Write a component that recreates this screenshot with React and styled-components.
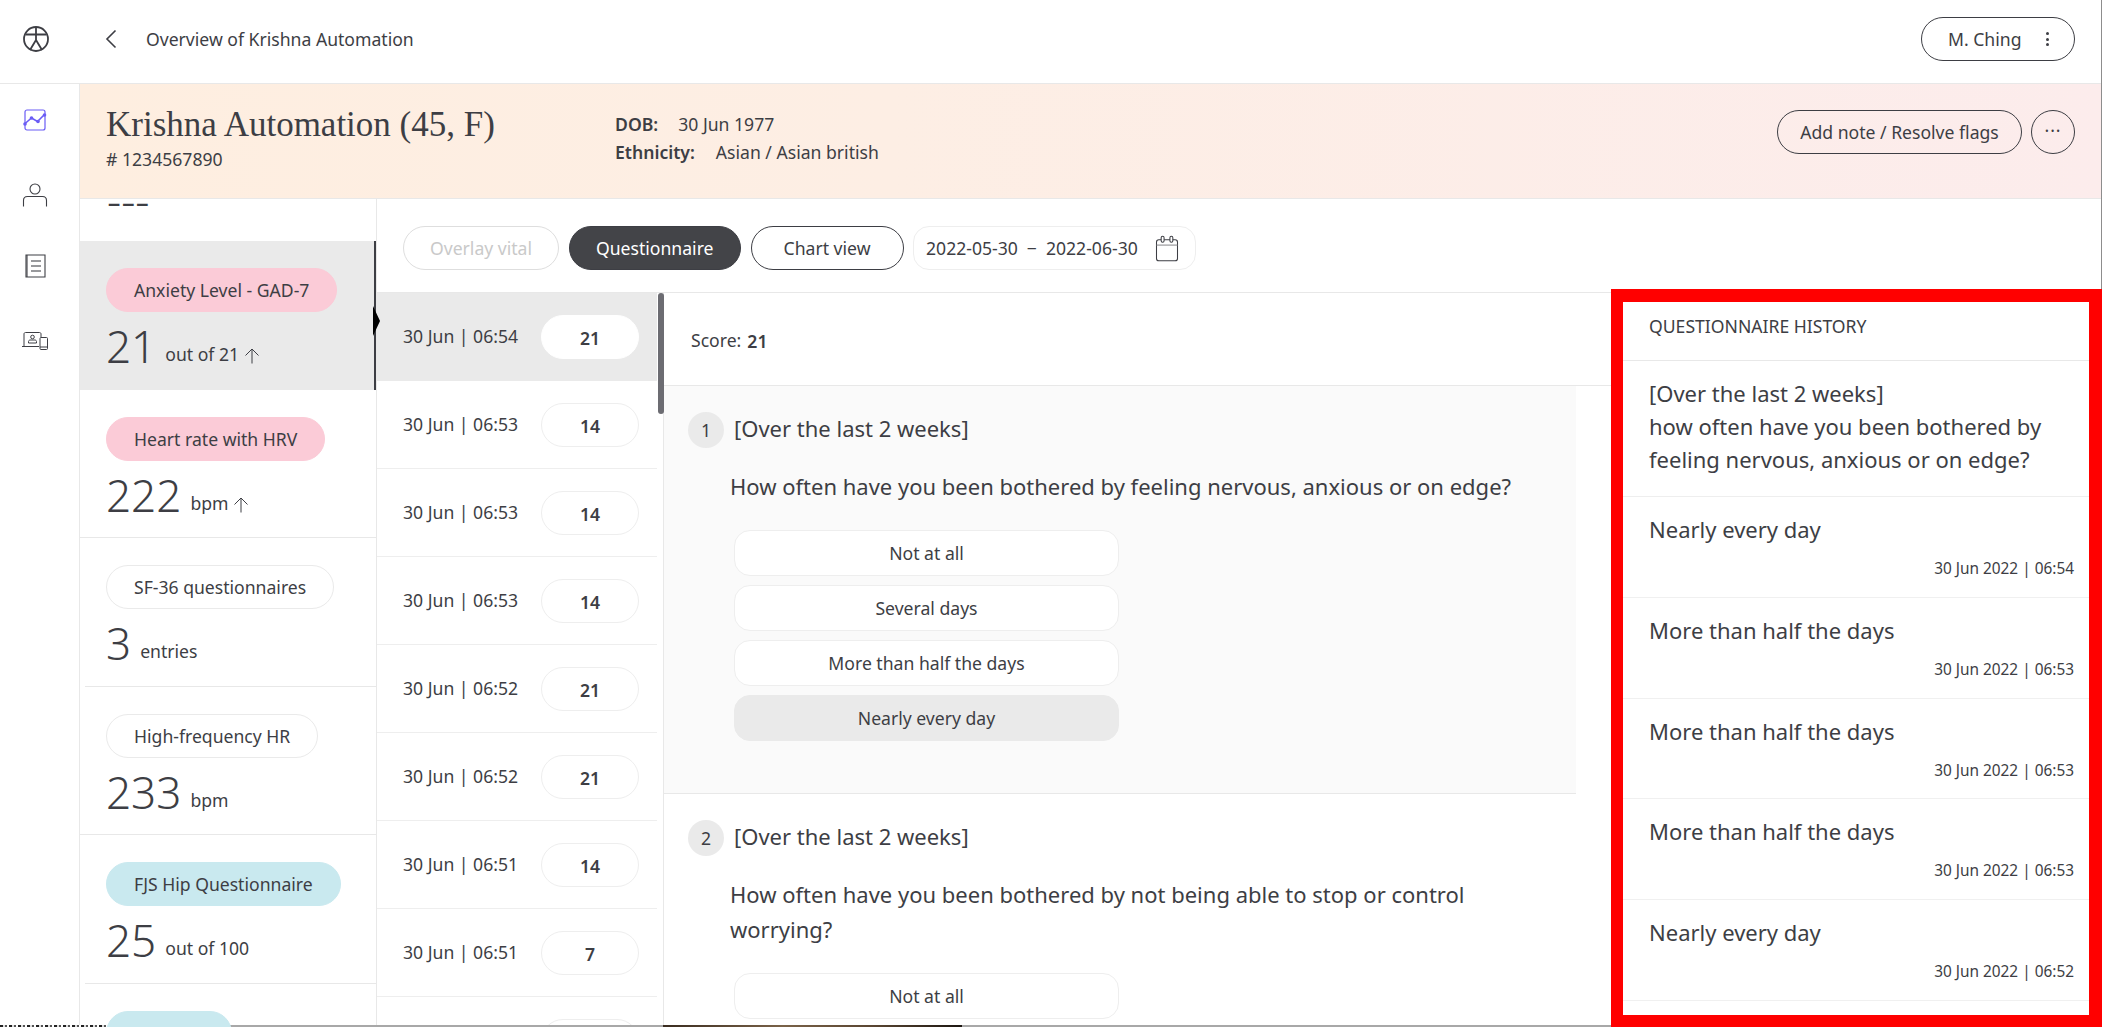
import React from 'react';
import styled, { createGlobalStyle } from 'styled-components';

const vitals = [
  { name: 'Anxiety Level - GAD-7', tone: 'pink', value: '21', unit: 'out of 21', up: true, selected: true },
  { name: 'Heart rate with HRV', tone: 'pink', value: '222', unit: 'bpm', up: true },
  { name: 'SF-36 questionnaires', value: '3', unit: 'entries', inset: true },
  { name: 'High-frequency HR', value: '233', unit: 'bpm' },
  { name: 'FJS Hip Questionnaire', tone: 'blue', value: '25', unit: 'out of 100', inset: true },
  { name: 'FJS Knee', tone: 'blue', value: '40', unit: 'out of 100' },
];

const entries = [
  { time: '30 Jun | 06:54', score: 21, selected: true },
  { time: '30 Jun | 06:53', score: 14 },
  { time: '30 Jun | 06:53', score: 14 },
  { time: '30 Jun | 06:53', score: 14 },
  { time: '30 Jun | 06:52', score: 21 },
  { time: '30 Jun | 06:52', score: 21 },
  { time: '30 Jun | 06:51', score: 14 },
  { time: '30 Jun | 06:51', score: 7 },
  { time: '30 Jun | 06:50', score: 7 },
];

const options = ['Not at all', 'Several days', 'More than half the days', 'Nearly every day'];

const questions = [
  {
    text: 'How often have you been bothered by feeling nervous, anxious or on edge?',
    answer: 'Nearly every day',
    shaded: true,
  },
  {
    text: 'How often have you been bothered by not being able to stop or control worrying?',
    answer: 'Not at all',
    cut: true,
  },
];

const history = [
  { answer: 'Nearly every day', date: '30 Jun 2022 | 06:54' },
  { answer: 'More than half the days', date: '30 Jun 2022 | 06:53' },
  { answer: 'More than half the days', date: '30 Jun 2022 | 06:53' },
  { answer: 'More than half the days', date: '30 Jun 2022 | 06:53' },
  { answer: 'Nearly every day', date: '30 Jun 2022 | 06:52' },
];

function LogoIcon() {
  return (
    <svg width="28" height="28" viewBox="0 0 28 28" fill="none" stroke="#3d3e44" strokeWidth="1.8">
      <circle cx="14" cy="14" r="12" />
      <path d="M3.5 9.5h21M14 2v13M14 15l-6 10M14 15l6 10" />
    </svg>
  );
}

function BackIcon() {
  return (
    <svg width="14" height="20" viewBox="0 0 14 20" fill="none" stroke="#3d3e44" strokeWidth="1.6">
      <path d="M11.5 1.5L3 10l8.5 8.5" />
    </svg>
  );
}

function ChartIcon() {
  return (
    <svg width="24" height="22" viewBox="0 0 24 22" fill="none" stroke="#6a5cf5" strokeWidth="1.2">
      <rect x="2" y="1" width="20" height="20" rx="2" />
      <path d="M1.5 15l7-6 6 3.5L21 6" strokeWidth="1.6" />
      <g fill="#6a5cf5" stroke="none">
        <circle cx="2" cy="15" r="1.8" />
        <circle cx="8.5" cy="9" r="1.8" />
        <circle cx="15" cy="12.5" r="1.8" />
        <circle cx="21.5" cy="6" r="1.8" />
      </g>
    </svg>
  );
}

function PersonIcon() {
  return (
    <svg width="26" height="24" viewBox="0 0 26 24" fill="none" stroke="#3d3e44" strokeWidth="1.1">
      <circle cx="13" cy="6" r="5" />
      <path d="M1.5 23.5v-6c0-2.5 1.5-4 4-4h15c2.500 0 4 1.500 4 4v6" />
    </svg>
  );
}

function NotesIcon() {
  return (
    <svg width="22" height="24" viewBox="0 0 22 24" fill="none" stroke="#3d3e44" strokeWidth="1.1">
      <path d="M2 1h19v22H2z" />
      <path d="M3 1v22" />
      <path d="M7 7h10M7 12h10M7 17h10" stroke="#77787c" strokeWidth="1.400" />
    </svg>
  );
}

function DevicesIcon() {
  return (
    <svg width="28" height="20" viewBox="0 0 28 20" fill="none" stroke="#3d3e44" strokeWidth="1">
      <path d="M3 15V3c0-1 .7-1.500 1.500-1.500h14c.8 0 1.500.5 1.500 1.500v3" />
      <path d="M1 15.500h17" />
      <circle cx="11.500" cy="6" r="1.800" />
      <path d="M7.500 12v-1.500c0-1 1-1.500 1.500-1.500h5c.7 0 1.500.5 1.500 1.500V12z" />
      <rect x="19" y="6.500" width="7.500" height="12" rx="1" />
      <path d="M19 16h7.500" />
    </svg>
  );
}

function CalendarIcon() {
  return (
    <svg width="28" height="28" viewBox="0 0 24 24" fill="none" stroke="#3d3e44" strokeWidth="0.9">
      <path d="M5 5h14c1 0 2 .8 2 2v14c0 1-.8 2-2 2H5c-1.200 0-2-.9-2-2V7c0-1.200.8-2 2-2z" strokeLinejoin="round" />
      <path d="M3 9.500h18" stroke="#8a8a8e" />
      <rect x="7" y="2" width="2.500" height="5" rx="1.200" fill="#fff" />
      <rect x="14.500" y="2" width="2.500" height="5" rx="1.200" fill="#fff" />
    </svg>
  );
}

function UpArrow() {
  return (
    <svg width="16" height="16" viewBox="0 0 16 16" fill="none" stroke="#3d3e44" strokeWidth="1">
      <path d="M8 15.500V1M1.500 7.500L8 1l6.500 6.500" />
    </svg>
  );
}

export default function App() {
  return (
    <Page>
      <GlobalStyle />

      <TopBar>
        <LogoCell>
          <LogoIcon />
        </LogoCell>
        <BackCell>
          <BackIcon />
        </BackCell>
        <PageTitle>Overview of Krishna Automation</PageTitle>
        <UserButton>
          M. Ching
          <KebabDots>
            <i />
            <i />
            <i />
          </KebabDots>
        </UserButton>
      </TopBar>

      <Body>
        <Rail>
          <RailItem $top={25}><ChartIcon /></RailItem>
          <RailItem $top={52}><PersonIcon /></RailItem>
          <RailItem $top={47}><NotesIcon /></RailItem>
          <RailItem $top={53}><DevicesIcon /></RailItem>
        </Rail>

        <Content>
          <PatientBand>
            <PatientName>
              <h1>Krishna Automation (45, F)</h1>
              <div># 1234567890</div>
            </PatientName>
            <PatientFacts>
              <FactRow><b>DOB:</b><FactValue $gap={20}>30 Jun 1977</FactValue></FactRow>
              <FactRow><b>Ethnicity:</b><FactValue $gap={21}>Asian / Asian british</FactValue></FactRow>
            </PatientFacts>
            <BandActions>
              <OutlineButton>Add note / Resolve flags</OutlineButton>
              <RoundButton>···</RoundButton>
            </BandActions>
          </PatientBand>

          <Workspace>
            <VitalsColumn>
              <ClippedStub><StubValue>---</StubValue></ClippedStub>
              {vitals.map((vital) => (
                <VitalCard key={vital.name} $selected={vital.selected}>
                  <VitalPill $tone={vital.tone}>{vital.name}</VitalPill>
                  <VitalReading>
                    <VitalNumber>{vital.value}</VitalNumber>
                    <VitalUnit>{vital.unit}</VitalUnit>
                    {vital.up && <ArrowSlot><UpArrow /></ArrowSlot>}
                  </VitalReading>
                  {!vital.selected && <VitalRule $inset={vital.inset} />}
                  {vital.selected && <SelectedMarker />}
                </VitalCard>
              ))}
            </VitalsColumn>

            <MainColumn>
              <Toolbar>
                <ToolPill $variant="disabled" $width={156}>Overlay vital</ToolPill>
                <ToolPill $variant="active" $width={172.5}>Questionnaire</ToolPill>
                <ToolPill $width={153}>Chart view</ToolPill>
                <DateRange>
                  <span>2022-05-30</span>
                  <DateDash>−</DateDash>
                  <span>2022-06-30</span>
                  <CalendarSlot><CalendarIcon /></CalendarSlot>
                </DateRange>
              </Toolbar>

              <SplitRow>
                <EntryList>
                  <ScrollThumb />
                  {entries.map((entry, i) => (
                    <EntryRow key={i} $selected={entry.selected}>
                      <EntryTime>{entry.time}</EntryTime>
                      <ScoreBadge $selected={entry.selected}>{entry.score}</ScoreBadge>
                    </EntryRow>
                  ))}
                </EntryList>

                <Detail>
                  <ScoreRow>Score: <b>21</b></ScoreRow>
                  {questions.map((question, i) => (
                    <QuestionBlock key={i} $shaded={question.shaded}>
                      <QuestionHead>
                        <QuestionNumber>{i + 1}</QuestionNumber>
                        <QuestionHeading>[Over the last 2 weeks]</QuestionHeading>
                      </QuestionHead>
                      <QuestionText>{question.text}</QuestionText>
                      <OptionStack>
                        {options.map((option) => (
                          <OptionButton key={option} $picked={!question.cut && option === question.answer}>
                            {option}
                          </OptionButton>
                        ))}
                      </OptionStack>
                    </QuestionBlock>
                  ))}
                </Detail>
              </SplitRow>
            </MainColumn>

            <HistoryColumn>
              <HistoryPanel>
                <HistoryTitle>QUESTIONNAIRE HISTORY</HistoryTitle>
                <HistoryQuestion>
                  [Over the last 2 weeks]
                  <br />
                  how often have you been bothered by feeling nervous, anxious or on edge?
                </HistoryQuestion>
                {history.map((item, i) => (
                  <HistoryRow key={i}>
                    <HistoryAnswer>{item.answer}</HistoryAnswer>
                    <HistoryDate>{item.date}</HistoryDate>
                  </HistoryRow>
                ))}
              </HistoryPanel>
            </HistoryColumn>
          </Workspace>
        </Content>
      </Body>

      <BottomStrip>
        <StripPiece $width={150} $bg="repeating-linear-gradient(90deg,#222 0 3px,#ddd 3px 5px,#555 5px 7px,#fff 7px 9px)" />
        <StripPiece $width={513} $bg="#a8a8a8" />
        <StripPiece $width={299} $bg="linear-gradient(90deg,#3a2c20,#7a6248 40%,#5a4632 70%,#1d1712)" />
        <StripPiece $width={649} $bg="#a8a8a8" />
      </BottomStrip>
    </Page>
  );
}

const GlobalStyle = createGlobalStyle`
  html, body {
    margin: 0;
    height: 100%;
    overflow: hidden;
    background: #fff;
  }
  * {
    box-sizing: border-box;
  }
  body {
    font-family: "Noto Sans", "Open Sans", sans-serif;
    font-size: 17.6px;
    color: #3d3e44;
  }
`;

const Page = styled.div`
  position: relative;
  width: 2102px;
  height: 1027px;
  display: flex;
  flex-direction: column;
  overflow: hidden;

  &::after {
    content: '';
    position: absolute;
    top: 0;
    right: 0;
    width: 1px;
    height: 289px;
    background: #8d8d8d;
  }
`;

const TopBar = styled.header`
  flex: 0 0 84px;
  display: flex;
  align-items: center;
  padding: 0 27px 5px 0;
  border-bottom: 1px solid #e8e8e8;
`;

const LogoCell = styled.div`
  width: 80px;
  padding-left: 22px;
  display: flex;
`;

const BackCell = styled.div`
  width: 66px;
  padding-left: 24px;
  display: flex;
`;

const PageTitle = styled.div`
  flex: 1;
`;

const UserButton = styled.div`
  width: 154px;
  height: 44px;
  display: flex;
  align-items: center;
  justify-content: space-between;
  padding: 0 25px 0 26px;
  border: 1px solid #3d3e44;
  border-radius: 22px;
`;

const KebabDots = styled.span`
  display: flex;
  flex-direction: column;
  gap: 2.500px;

  i {
    display: block;
    width: 3px;
    height: 3px;
    border-radius: 50%;
    background: #3d3e44;
  }
`;

const Body = styled.div`
  flex: 1;
  display: flex;
  min-height: 0;
`;

const Rail = styled.nav`
  flex: 0 0 80px;
  display: flex;
  flex-direction: column;
  align-items: center;
  padding-right: 10px;
  border-right: 1px solid #e8e8e8;
`;

const RailItem = styled.div`
  margin-top: ${(p) => p.$top}px;
  display: flex;
`;

const Content = styled.div`
  flex: 1;
  min-width: 0;
  display: flex;
  flex-direction: column;
`;

const PatientBand = styled.section`
  flex: 0 0 115px;
  display: flex;
  align-items: flex-start;
  padding: 0 27px 0 26px;
  background: linear-gradient(90deg, #feeee0 0%, #fdeee4 40%, #fcecec 100%);
  border-bottom: 1px solid #e8e8e8;
`;

const PatientName = styled.div`
  width: 509px;
  padding-top: 19px;
  line-height: 24px;

  h1 {
    margin: 0;
    font-family: "Liberation Serif", "Times New Roman", serif;
    font-weight: 400;
    font-size: 35px;
    line-height: 44px;
  }
`;

const PatientFacts = styled.div`
  flex: 1;
  padding-top: 26px;
`;

const FactRow = styled.div`
  display: flex;
  height: 28px;
  line-height: 28px;

  b {
    font-weight: 600;
  }
`;

const FactValue = styled.span`
  margin-left: ${(p) => p.$gap}px;
`;

const BandActions = styled.div`
  display: flex;
  gap: 9px;
  padding-top: 26px;
`;

const OutlineButton = styled.div`
  width: 245px;
  height: 44px;
  display: flex;
  align-items: center;
  justify-content: center;
  border: 1px solid #3d3e44;
  border-radius: 22px;
`;

const RoundButton = styled(OutlineButton)`
  width: 44px;
  padding-bottom: 4px;
  letter-spacing: 1px;
`;

const Workspace = styled.div`
  flex: 1;
  min-height: 0;
  display: flex;
  overflow: hidden;
`;

const VitalsColumn = styled.aside`
  flex: 0 0 296px;
  position: relative;
  z-index: 2;
`;

const ClippedStub = styled.div`
  height: 42px;
  padding-left: 27px;
  overflow: hidden;
`;

const StubValue = styled.div`
  margin-top: -21px;
  font-size: 44px;
  font-weight: 300;
  line-height: 44px;
`;

const VitalCard = styled.article`
  position: relative;
  height: 148.6px;
  padding: 27px 0 0 26px;
  background: ${(p) => (p.$selected ? '#eaeaea' : 'transparent')};
`;

const toneColors = { pink: '#fbcbd7', blue: '#c9e9ef' };

const VitalPill = styled.div`
  display: inline-block;
  height: 44px;
  padding: 0 27px;
  line-height: 42px;
  border-radius: 22px;
  border: 1px solid ${(p) => toneColors[p.$tone] || '#eaeaea'};
  background: ${(p) => toneColors[p.$tone] || '#fff'};
`;

const VitalReading = styled.div`
  display: flex;
  align-items: flex-end;
  margin-top: 9px;
`;

const VitalNumber = styled.span`
  font-size: 44px;
  font-weight: 300;
  line-height: 50px;
  margin-right: 9px;
`;

const VitalUnit = styled.span`
  font-size: 17.6px;
  line-height: 24px;
  margin-bottom: 5px;
`;

const ArrowSlot = styled.span`
  margin-left: 5px;
  margin-bottom: 7px;
  display: flex;
`;

const VitalRule = styled.div`
  position: absolute;
  left: ${(p) => (p.$inset ? 5 : 0)}px;
  right: 0;
  bottom: 0;
  height: 1px;
  background: #e8e8e8;
`;

const SelectedMarker = styled.div`
  position: absolute;
  top: 0;
  bottom: 0;
  right: 0;
  width: 2px;
  background: #3d3e44;

  &::after {
    content: '';
    position: absolute;
    top: 65px;
    left: -1px;
    width: 7px;
    height: 30px;
    background: #000;
    clip-path: polygon(0 0, 100% 50%, 0 100%);
  }
`;

const MainColumn = styled.main`
  flex: 0 0 1235px;
  display: flex;
  flex-direction: column;
  border-left: 1px solid #e8e8e8;
  min-height: 0;
`;

const Toolbar = styled.div`
  flex: 0 0 94px;
  display: flex;
  align-items: flex-start;
  gap: 9.5px;
  padding: 27px 0 0 26px;
  border-bottom: 1px solid #e8e8e8;
`;

const ToolPill = styled.div`
  width: ${(p) => p.$width}px;
  height: 44px;
  display: flex;
  align-items: center;
  justify-content: center;
  border-radius: 22px;
  border: 1px solid ${(p) => (p.$variant === 'disabled' ? '#dedede' : '#3d3e44')};
  background: ${(p) => (p.$variant === 'active' ? '#434448' : '#fff')};
  color: ${(p) => {
    if (p.$variant === 'active') return '#fff';
    if (p.$variant === 'disabled') return '#c9c9c9';
    return '#3d3e44';
  }};
`;

const DateRange = styled.div`
  width: 283px;
  height: 44px;
  display: flex;
  align-items: center;
  padding-left: 12px;
  border: 1px solid #eeeeee;
  border-radius: 16px;
`;

const DateDash = styled.span`
  margin: 0 9px;
`;

const CalendarSlot = styled.span`
  margin-left: 15px;
  display: flex;
`;

const SplitRow = styled.div`
  flex: 1;
  min-height: 0;
  display: flex;
`;

const EntryList = styled.div`
  flex: 0 0 287px;
  position: relative;
  padding-right: 6px;
  border-right: 1px solid #e8e8e8;
`;

const ScrollThumb = styled.div`
  position: absolute;
  top: 0;
  right: -1px;
  width: 6px;
  height: 121px;
  border-radius: 3px;
  background: #6c6c72;
`;

const EntryRow = styled.div`
  height: 88px;
  display: flex;
  align-items: center;
  justify-content: space-between;
  padding: 0 18px 0 26px;
  background: ${(p) => (p.$selected ? '#eaeaea' : 'transparent')};
  border-bottom: 1px solid ${(p) => (p.$selected ? '#eaeaea' : '#eeeeee')};
`;

const EntryTime = styled.span`
  margin-bottom: 2px;
`;

const ScoreBadge = styled.div`
  width: 98px;
  height: 44px;
  display: flex;
  align-items: center;
  justify-content: center;
  padding-top: 2px;
  font-weight: 600;
  border-radius: 22px;
  background: #fff;
  border: 1px solid ${(p) => (p.$selected ? '#fff' : '#eeeeee')};
`;

const Detail = styled.div`
  flex: 1;
  min-width: 0;
`;

const ScoreRow = styled.div`
  height: 93px;
  display: flex;
  align-items: center;
  gap: 6px;
  padding: 1px 0 0 27px;
  border-bottom: 1px solid #e8e8e8;

  b {
    font-weight: 600;
    padding-top: 2px;
  }
`;

const QuestionBlock = styled.section`
  width: 912px;
  padding: 26px 0 52px 24px;
  background: ${(p) => (p.$shaded ? '#fafafa' : '#fff')};
  border-bottom: 1px solid #e8e8e8;
`;

const QuestionHead = styled.div`
  display: flex;
  align-items: center;
  gap: 10px;
  font-size: 22px;
  line-height: 32px;
`;

const QuestionHeading = styled.span`
  margin-bottom: 4px;
`;

const QuestionNumber = styled.span`
  width: 36px;
  height: 36px;
  display: flex;
  align-items: center;
  justify-content: center;
  border-radius: 50%;
  background: #eaeaea;
  font-size: 17.6px;
`;

const QuestionText = styled.p`
  margin: 21px 0 26px 42px;
  max-width: 800px;
  font-size: 22px;
  line-height: 35px;
`;

const OptionStack = styled.div`
  display: flex;
  flex-direction: column;
  gap: 9px;
  width: 385px;
  margin-left: 46px;
`;

const OptionButton = styled.div`
  height: 46px;
  display: flex;
  align-items: center;
  justify-content: center;
  border-radius: 16px;
  border: 1px solid ${(p) => (p.$picked ? '#eaeaea' : '#eeeeee')};
  background: ${(p) => (p.$picked ? '#eaeaea' : '#fff')};
`;

const HistoryColumn = styled.div`
  flex: 0 0 491px;
  padding-top: 90px;
  display: flex;
  min-height: 0;
`;

const HistoryPanel = styled.aside`
  flex: 1;
  overflow: hidden;
  background: #fff;
  border-style: solid;
  border-color: #ff0000;
  border-width: 13px 13px 12px 12px;
`;

const HistoryTitle = styled.div`
  height: 59px;
  padding: 0 26px 10px;
  display: flex;
  align-items: center;
  border-bottom: 1px solid #e8e8e8;
`;

const HistoryQuestion = styled.div`
  height: 136px;
  padding: 16px 26px 0;
  font-size: 22px;
  line-height: 33px;
  border-bottom: 1px solid #eeeeee;
`;

const HistoryRow = styled.div`
  height: 100.8px;
  padding: 18px 15px 0 26px;
  border-bottom: 1px solid #f0f0f0;
`;

const HistoryAnswer = styled.div`
  font-size: 22px;
  line-height: 28px;
`;

const HistoryDate = styled.div`
  margin-top: 16px;
  text-align: right;
  font-size: 15.4px;
  line-height: 20px;
`;

const BottomStrip = styled.div`
  position: absolute;
  left: 0;
  bottom: 0;
  height: 2px;
  display: flex;
`;

const StripPiece = styled.div`
  width: ${(p) => p.$width}px;
  background: ${(p) => p.$bg};
`;
